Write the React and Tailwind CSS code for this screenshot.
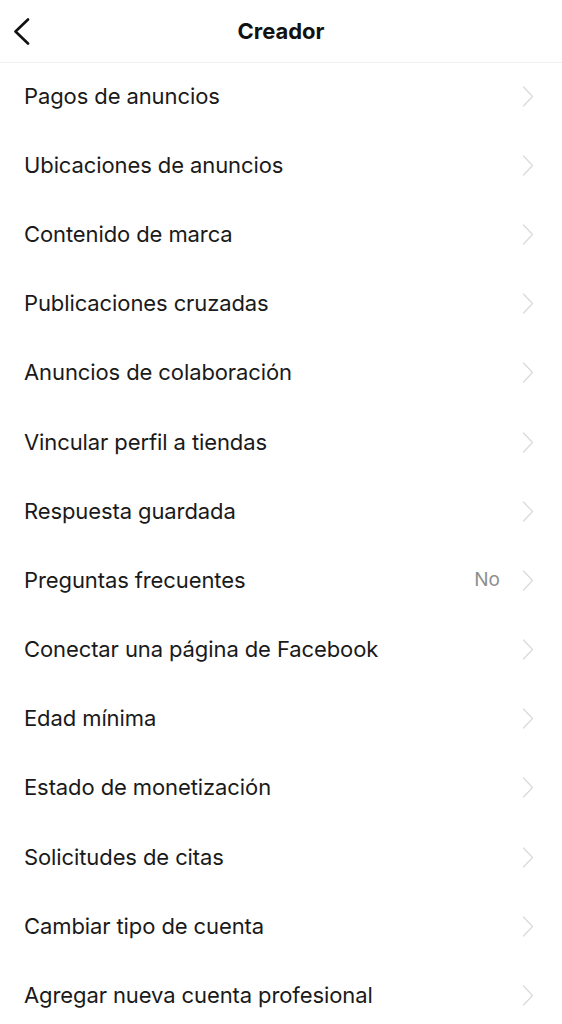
import React from 'react';

const items = [
  { label: 'Pagos de anuncios' },
  { label: 'Ubicaciones de anuncios' },
  { label: 'Contenido de marca' },
  { label: 'Publicaciones cruzadas' },
  { label: 'Anuncios de colaboración' },
  { label: 'Vincular perfil a tiendas' },
  { label: 'Respuesta guardada' },
  { label: 'Preguntas frecuentes', value: 'No' },
  { label: 'Conectar una página de Facebook' },
  { label: 'Edad mínima' },
  { label: 'Estado de monetización' },
  { label: 'Solicitudes de citas' },
  { label: 'Cambiar tipo de cuenta' },
  { label: 'Agregar nueva cuenta profesional' },
];

const Chevron = () => (
  <svg width="12" height="21" viewBox="0 0 12 21" fill="none">
    <path d="M1.5 1 L10.5 10.5 L1.5 20" stroke="#d9d9d9" strokeWidth="1.2" strokeLinecap="round" strokeLinejoin="round" />
  </svg>
);

const App = () => {
  return (
    <div className="w-[562px] h-[1024px] bg-white overflow-hidden" style={{ fontFamily: 'Inter, "Liberation Sans", sans-serif' }}>
      <div className="h-[63px] flex items-center relative border-b border-[#f0f0f0]">
        <button className="pl-[13px] pr-2 h-full flex items-center">
          <svg width="17" height="27" viewBox="0 0 17 27" fill="none">
            <path d="M15 1.5 L2.5 13.5 L15 25.5" stroke="#111" strokeWidth="2.6" strokeLinecap="round" strokeLinejoin="round" />
          </svg>
        </button>
        <h1 className="absolute inset-x-0 top-[18px] text-center text-[22px] font-bold text-[#111] leading-[26px]">Creador</h1>
      </div>
      <div className="flex flex-col">
        {items.map((item) => (
          <div key={item.label} className="h-[69.2px] pb-[3px] flex items-center pl-[24px] pr-[28px]">
            <span className="flex-1 text-[22px] text-[#1a1a1a] tracking-[-0.1px]">{item.label}</span>
            {item.value && <span className="text-[19px] text-[#8e8e8e] mr-[22px]">{item.value}</span>}
            <Chevron />
          </div>
        ))}
      </div>
    </div>
  );
};

export default App;
